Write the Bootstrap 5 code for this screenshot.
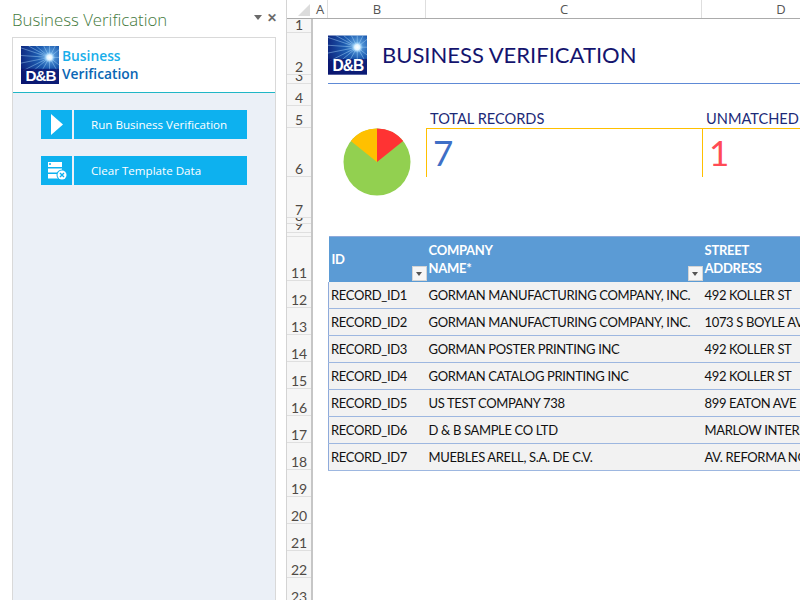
<!DOCTYPE html>
<html lang="en">
<head>
<meta charset="utf-8">
<title>Business Verification</title>
<link href="https://cdn.jsdelivr.net/npm/bootstrap@5.3.0/dist/css/bootstrap.min.css" rel="stylesheet">
<style>
html,body{height:600px;overflow:hidden;background:#fff}
body{font-family:"Lato","Liberation Sans",sans-serif;color:#1a1a1a}
.task-pane{width:287px;height:600px;flex:none;background:#fff;border-right:1px solid #d4d4d4;padding:0 9px 0 12px}
.pane-head{height:37px;padding-top:8px;color:#43793c;font:300 16.8px/24px "Open Sans",sans-serif}
.pane-tools{color:#6a6a6a;font:600 12px/14px "Liberation Sans",sans-serif;padding:3px 0 0;gap:5px}
.pane-arrow{width:0;height:0;border:4px solid transparent;border-top:5px solid #6a6a6a;margin-top:4px}
.pane-box{height:563px;width:264px;border:1px solid #d9d9d9;border-bottom:0;background:#ebf0f7}
.brand{height:55px;background:#fff;border-bottom:1px solid #1fb6c6;padding:8px 0 0 8px;gap:3px}
.brand-text{font:600 13.8px/18px "Open Sans",sans-serif;color:#0a66b4;padding-top:1px}
.brand-text span{color:#18aeea;display:block}
.pane-actions{padding:17px 0 0 28px;gap:17px}
.act{height:29px;gap:2px}
.act-icon{width:31px;background:#0db1ef}
.act-btn{width:173px;height:29px;background:#0db1ef;color:#fff;border:0;border-radius:0;padding:0 0 0 17px;text-align:left;font:400 11.6px/29px "Open Sans",sans-serif}
.sheet{width:513px;height:600px;flex:none;overflow:hidden}
.col-heads{height:19px;border-bottom:1px solid #ababab;background:#fff;color:#555;font:13px/18px "Open Sans",sans-serif}
.corner{width:26px;flex:none;position:relative}
.corner i{position:absolute;right:3px;bottom:2px;width:0;height:0;border-left:12px solid transparent;border-bottom:12px solid #dcdcdc}
.ch{text-align:center;border-right:1px solid #dedede;flex:none}
.w-a{width:15px}.w-b{width:98px;padding-left:1px}.w-c{width:276px;padding-left:1px}.w-d{width:158px;border-right:0}
.rows-col{width:26px;flex:none;background:#f6f6f6;border-right:2px solid #c6c6c6;color:#4f4a45;font:14px/14px "Lato",sans-serif}
.rn{border-bottom:1px solid #dfdfdf;display:flex;align-items:flex-end;justify-content:center;overflow:hidden}
.content{flex:1;min-width:0;padding-left:15px;overflow:hidden}
.doc-head{height:65px;border-bottom:1px solid #5e8ad6;padding-top:16px;gap:15px;width:472px}
.doc-title{font:400 22px/40px "Lato",sans-serif;color:#14146e}
.kpis{height:152px}
.pie-wrap{width:98px;padding:44px 0 0 15px}
.kpi{height:71px;padding-top:22px}
.kpi-label{font:400 14.6px/26px "Lato",sans-serif;color:#1c2a78;padding-left:4px;height:22px;white-space:nowrap}
.kpi-val{height:49px;border-top:1px solid #ffc000;border-left:1px solid #ffc000;font:400 35px/46px "Lato",sans-serif;padding-left:6px}
.k1{width:276px}.k2{width:98px}
.tone-blue{color:#3f6fc6}.tone-red{color:#ff4b55}
.grid-tbl{width:532px;table-layout:fixed;border-collapse:collapse;margin:0;font:400 13px/17px "Lato",sans-serif;letter-spacing:-.35px;color:#111}
.grid-tbl th{background:#5b9bd5;color:#fff;font-weight:700;height:45px;padding:0 0 0 2px;position:relative;line-height:18px;vertical-align:middle;border-top:1px solid #8eaadb;letter-spacing:-.25px}
.grid-tbl td{height:27px;padding:1px 0 0 2px;white-space:nowrap;overflow:hidden;border-bottom:1px solid #9db7e0;background:#f2f2f2;vertical-align:middle}
.grid-tbl td:first-child{border-left:1px solid #8eaadb;padding-left:2px}
.grid-tbl th:first-child{padding-left:3px}
.filter-btn{position:absolute;right:0;bottom:1px;width:15px;height:15px;background:#f6f6f6;border:1px solid #d4d4d4}
.filter-btn::after{content:"";position:absolute;left:3px;top:5px;border:3.5px solid transparent;border-top:4px solid #555}
</style>
</head>
<body class="d-flex">
<svg width="0" height="0" class="position-absolute">
<defs>
<radialGradient id="lgbg" cx=".76" cy=".26" r=".95"><stop offset="0" stop-color="#6fb4ea"/><stop offset=".35" stop-color="#1c5bb0"/><stop offset="1" stop-color="#0a1670"/></radialGradient>
<radialGradient id="lgstar"><stop offset="0" stop-color="#fff"/><stop offset=".45" stop-color="#dff3ff"/><stop offset="1" stop-color="#8fd0ff" stop-opacity="0"/></radialGradient>
<symbol id="dnb" viewBox="0 0 40 40">
<rect width="40" height="40" fill="url(#lgbg)"/>
<g stroke="#a9d8fb" stroke-width=".6" opacity=".8">
<path d="M30 12L0 2M30 12L0 10M30 12L0 18M30 12L2 26M30 12L8 0M30 12L16 0M30 12L24 0M30 12L30 0M30 12L36 0M30 12L40 4M30 12L40 12M30 12L40 20M30 12L38 26M30 12L30 26M30 12L22 26M30 12L13 26"/>
</g>
<circle cx="30" cy="12" r="6" fill="url(#lgstar)"/>
<rect y="24" width="40" height="16" fill="#0a1670" opacity=".8"/>
<text x="20.5" y="36.5" text-anchor="middle" fill="#fff" font-family="Liberation Sans,sans-serif" font-weight="700" font-size="16" letter-spacing="-1">D&amp;B</text>
</symbol>
</defs>
</svg>

<aside class="task-pane">
  <div class="pane-head d-flex justify-content-between">
    <span>Business Verification</span>
    <span class="pane-tools d-flex"><span class="pane-arrow"></span><span>✕</span></span>
  </div>
  <div class="pane-box">
    <div class="brand d-flex">
      <svg width="38" height="38"><use href="#dnb"/></svg>
      <div class="brand-text"><span>Business</span>Verification</div>
    </div>
    <div class="pane-actions d-flex flex-column">
      <div class="act d-flex">
        <div class="act-icon d-flex align-items-center justify-content-center">
          <svg width="12" height="21" viewBox="0 0 12 21"><path d="M0 0L12 10.5L0 21Z" fill="#fff"/></svg>
        </div>
        <button type="button" class="btn act-btn">Run Business Verification</button>
      </div>
      <div class="act d-flex">
        <div class="act-icon d-flex align-items-center justify-content-center">
          <svg width="20" height="19" viewBox="0 0 20 19"><path d="M1 1h14v5H1zM1 7.5h14v4H1zM1 13h10v4.500H1z" fill="#fff"/><circle cx="3" cy="3" r="1" fill="#0db1ef"/><circle cx="15" cy="14" r="5.500" fill="#0db1ef"/><circle cx="15" cy="14" r="4.500" fill="#fff"/><path d="M13 12l4 4m0-4l-4 4" stroke="#0db1ef" stroke-width="1.400"/></svg>
        </div>
        <button type="button" class="btn act-btn">Clear Template Data</button>
      </div>
    </div>
  </div>
</aside>

<main class="sheet">
  <div class="col-heads d-flex">
    <div class="corner"><i></i></div>
    <div class="ch w-a">A</div><div class="ch w-b">B</div><div class="ch w-c">C</div><div class="ch w-d">D</div>
  </div>
  <div class="d-flex">
    <div class="rows-col">
      <div class="rn" style="height:14px">1</div>
      <div class="rn" style="height:42px">2</div>
      <div class="rn" style="height:9px">3</div>
      <div class="rn" style="height:22px">4</div>
      <div class="rn" style="height:22px">5</div>
      <div class="rn" style="height:49px">6</div>
      <div class="rn" style="height:41px">7</div>
      <div class="rn" style="height:6px">8</div>
      <div class="rn" style="height:9px">9</div>
      <div class="rn" style="height:4px"></div>
      <div class="rn" style="height:44px">11</div>
      <div class="rn" style="height:27px">12</div>
      <div class="rn" style="height:27px">13</div>
      <div class="rn" style="height:27px">14</div>
      <div class="rn" style="height:27px">15</div>
      <div class="rn" style="height:27px">16</div>
      <div class="rn" style="height:27px">17</div>
      <div class="rn" style="height:27px">18</div>
      <div class="rn" style="height:27px">19</div>
      <div class="rn" style="height:27px">20</div>
      <div class="rn" style="height:27px">21</div>
      <div class="rn" style="height:27px">22</div>
      <div class="rn" style="height:27px">23</div>
    </div>
    <div class="content">
      <div class="doc-head d-flex">
        <svg width="39" height="40"><use href="#dnb"/></svg>
        <div class="doc-title">BUSINESS VERIFICATION</div>
      </div>
      <div class="kpis d-flex">
        <div class="pie-wrap">
          <svg width="68" height="68" viewBox="-34 -34 68 68">
            <circle r="33.5" fill="#92d050"/>
            <path d="M0 0V-33.5A33.5 33.5 0 0 1 26.2 -20.9Z" fill="#ff3333"/>
            <path d="M0 0V-33.5A33.5 33.5 0 0 0 -26.2 -20.9Z" fill="#ffc000"/>
          </svg>
        </div>
        <div class="kpi k1"><div class="kpi-label">TOTAL RECORDS</div><div class="kpi-val tone-blue">7</div></div>
        <div class="kpi k2"><div class="kpi-label">UNMATCHED</div><div class="kpi-val tone-red">1</div></div>
      </div>
      <table class="grid-tbl">
        <colgroup><col style="width:98px"><col style="width:276px"><col style="width:158px"></colgroup>
        <thead><tr>
          <th>ID<span class="filter-btn"></span></th>
          <th>COMPANY<br>NAME*<span class="filter-btn"></span></th>
          <th>STREET<br>ADDRESS</th>
        </tr></thead>
        <tbody>
          <tr><td>RECORD_ID1</td><td>GORMAN MANUFACTURING COMPANY, INC.</td><td>492 KOLLER ST</td></tr>
          <tr><td>RECORD_ID2</td><td>GORMAN MANUFACTURING COMPANY, INC.</td><td>1073 S BOYLE AVE</td></tr>
          <tr><td>RECORD_ID3</td><td>GORMAN POSTER PRINTING INC</td><td>492 KOLLER ST</td></tr>
          <tr><td>RECORD_ID4</td><td>GORMAN CATALOG PRINTING INC</td><td>492 KOLLER ST</td></tr>
          <tr><td>RECORD_ID5</td><td>US TEST COMPANY 738</td><td>899 EATON AVE</td></tr>
          <tr><td>RECORD_ID6</td><td>D &amp; B SAMPLE CO LTD</td><td>MARLOW INTERNATIONAL</td></tr>
          <tr><td>RECORD_ID7</td><td>MUEBLES ARELL, S.A. DE C.V.</td><td>AV. REFORMA NORTE</td></tr>
        </tbody>
      </table>
    </div>
  </div>
</main>
<script src="https://cdn.jsdelivr.net/npm/bootstrap@5.3.0/dist/js/bootstrap.bundle.min.js"></script>
</body>
</html>
